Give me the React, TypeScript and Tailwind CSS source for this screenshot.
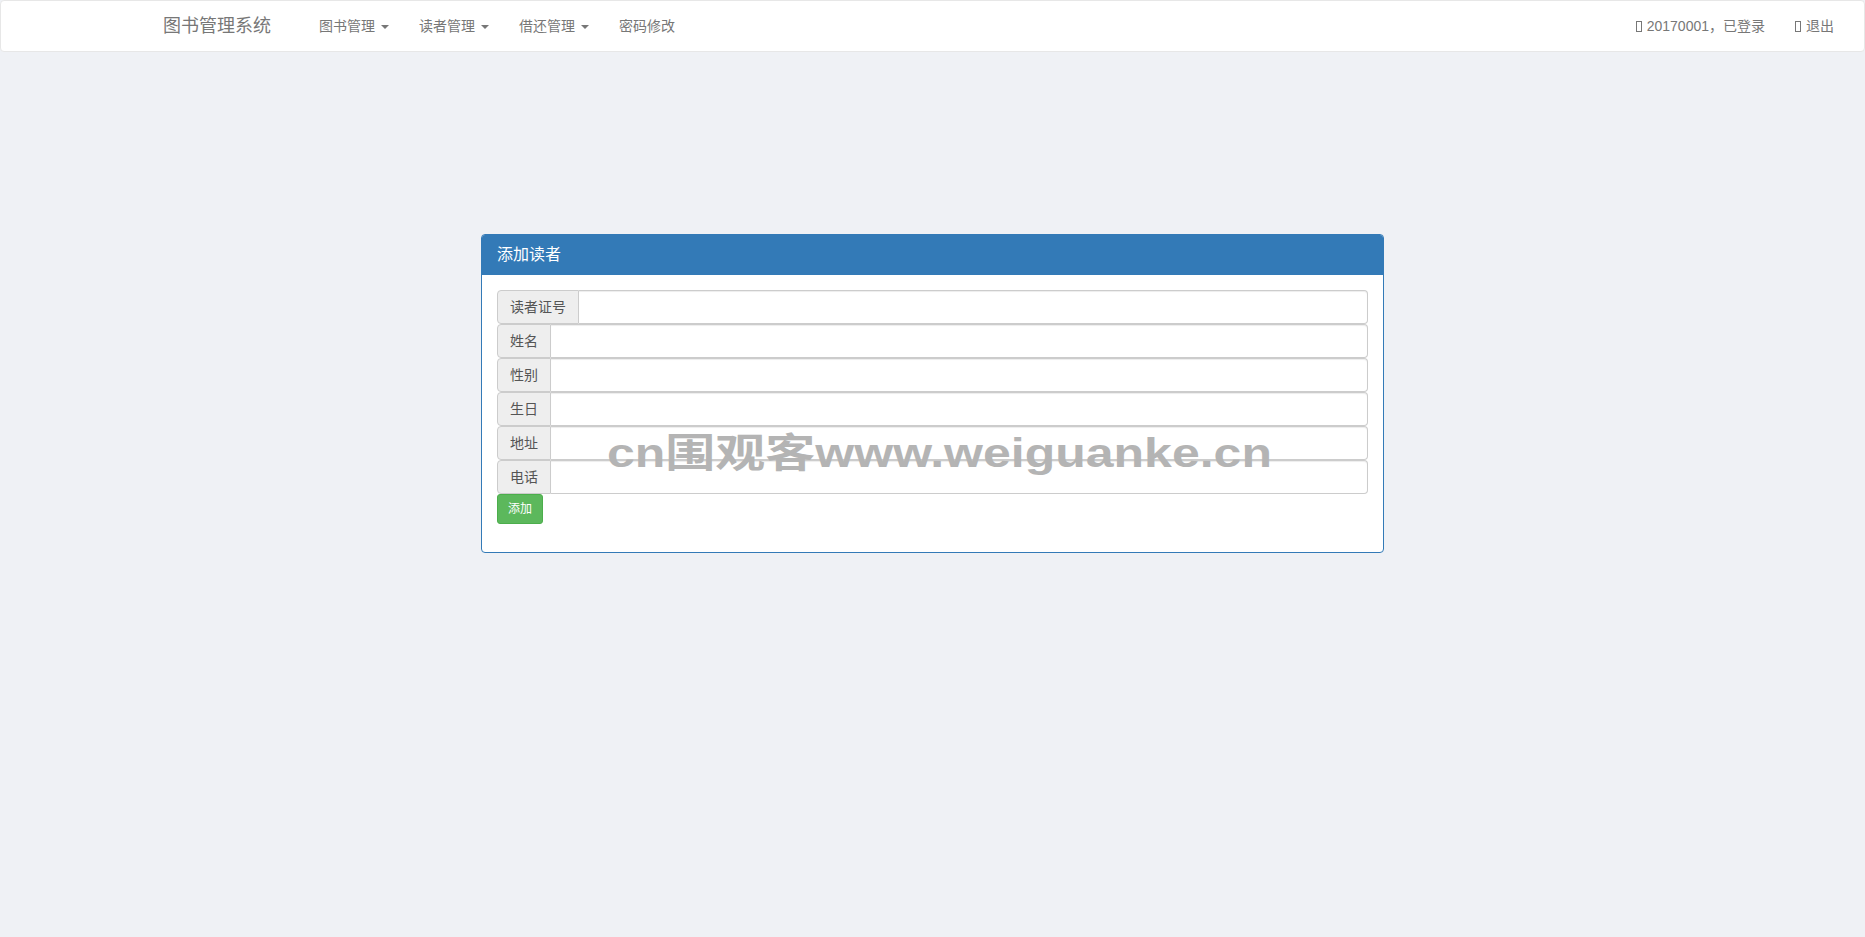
const font = { fontFamily: '"Liberation Sans", "Noto Sans CJK SC", sans-serif' }

const navItems = [
  { label: '图书管理', caret: true },
  { label: '读者管理', caret: true },
  { label: '借还管理', caret: true },
  { label: '密码修改', caret: false },
]

const fields = [
  { label: '读者证号', name: 'readerId' },
  { label: '姓名', name: 'name' },
  { label: '性别', name: 'sex' },
  { label: '生日', name: 'birth' },
  { label: '地址', name: 'address' },
  { label: '电话', name: 'telcode' },
]

// glyphicon font is missing in the screenshot, so the browser drew an empty box
const MissingGlyph = () => (
  <span className="mr-[5px] inline-block h-[11px] w-[6px] border border-[#777] align-[-1px]" />
)

const Caret = () => (
  <span className="ml-[6px] inline-block h-0 w-0 border-x-[4px] border-t-[4px] border-x-transparent border-t-[#777] align-middle" />
)

const Navbar = () => (
  <nav className="flex h-[52px] items-center rounded-[4px] border border-[#e7e7e7] bg-white text-[#777]">
    <a className="ml-[147px] px-[15px] text-[18px] leading-[20px]">图书管理系统</a>
    <ul className="ml-[18px] flex">
      {navItems.map((item) => (
        <li key={item.label}>
          <a className="block px-[15px] py-[15px] text-[14px] leading-[20px]">
            {item.label}
            {item.caret && <Caret />}
          </a>
        </li>
      ))}
    </ul>
    <ul className="ml-auto mr-[15px] flex">
      <li>
        <a className="block px-[15px] py-[15px] text-[14px] leading-[20px]">
          <MissingGlyph />
          20170001，已登录
        </a>
      </li>
      <li>
        <a className="block px-[15px] py-[15px] text-[14px] leading-[20px]">
          <MissingGlyph />
          退出
        </a>
      </li>
    </ul>
  </nav>
)

const AddReaderPanel = () => (
  <div className="mx-auto mt-[182px] w-[903px] rounded-[4px] border border-[#337ab7] bg-white">
    <div className="flex h-[40px] items-center rounded-t-[3px] bg-[#337ab7] px-[15px] text-[16px] text-white">
      添加读者
    </div>
    <form className="px-[15px] pt-[15px] pb-[28px]">
      {fields.map((f) => (
        <div key={f.name} className="flex h-[34px]">
          <span className="flex items-center rounded-l-[4px] border border-[#ccc] bg-[#eee] px-[12px] text-[14px] text-[#555]">
            {f.label}
          </span>
          <input
            name={f.name}
            className="min-w-0 flex-1 rounded-r-[4px] border border-l-0 border-[#ccc] bg-white px-[12px] text-[14px] text-[#555] shadow-[inset_0_1px_1px_rgba(0,0,0,0.075)] outline-none"
          />
        </div>
      ))}
      <button
        type="button"
        className="h-[30px] rounded-[3px] border border-[#4cae4c] bg-[#5cb85c] px-[10px] text-[12px] text-white"
      >
        添加
      </button>
    </form>
  </div>
)

export default function App() {
  return (
    <div className="relative min-h-[937px] bg-[#eff1f5]" style={font}>
      <Navbar />
      <AddReaderPanel />
      {/* watermark stamped over the screenshot */}
      <div className="pointer-events-none absolute left-[607px] top-[428px] origin-left scale-y-[0.8] whitespace-nowrap text-[50px] font-bold leading-none text-[#b4b4b4]">
        cn围观客www.weiguanke.cn
      </div>
    </div>
  )
}
